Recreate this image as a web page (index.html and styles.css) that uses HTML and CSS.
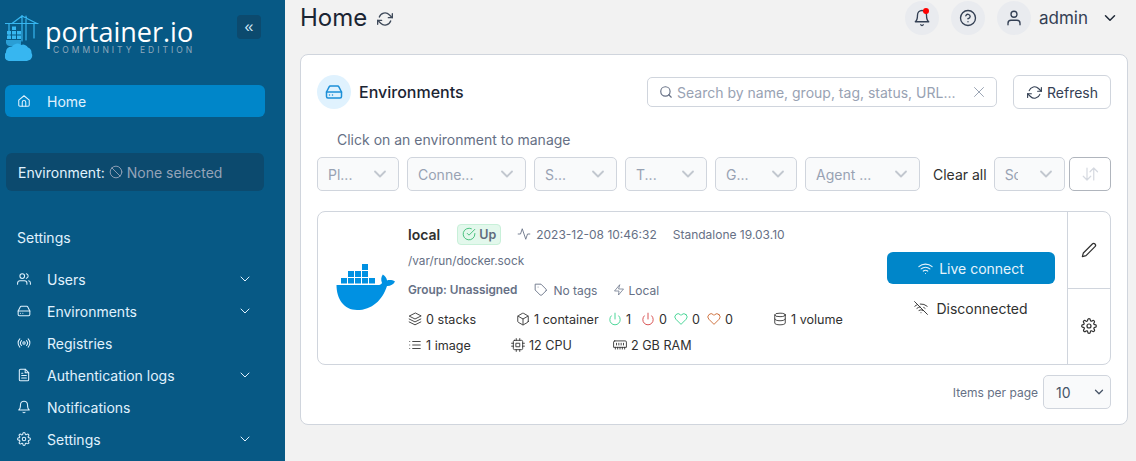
FILE: index.html
```html
<!DOCTYPE html>
<html lang="en">
<head>
  <meta charset="UTF-8" />
  <title>Portainer - Home</title>
  <meta name="viewport" content="width=device-width, initial-scale=1.0">
  <link rel="stylesheet" href="styles.css">
</head>
<body>
  <svg class="defs" width="0" height="0">
    <symbol id="chev" viewBox="0 0 24 24"><path d="M6 9l6 6 6-6"/></symbol>
    <symbol id="drive" viewBox="0 0 24 24"><path d="M22 12H2"/><path d="M5.5 5.1L2 12v6a2 2 0 0 0 2 2h16a2 2 0 0 0 2-2v-6l-3.5-6.9A2 2 0 0 0 16.8 4H7.2a2 2 0 0 0-1.7 1.1z"/><path d="M6 16h.01M10 16h.01"/></symbol>
    <symbol id="gear" viewBox="0 0 24 24"><circle cx="12" cy="12" r="3"/><path d="M19.4 15a1.65 1.65 0 0 0 .33 1.82l.06.06a2 2 0 1 1-2.83 2.83l-.06-.06a1.65 1.65 0 0 0-2.82 1.17V21a2 2 0 1 1-4 0v-.09a1.65 1.65 0 0 0-2.88-1.11l-.06.06a2 2 0 1 1-2.83-2.83l.06-.06A1.65 1.65 0 0 0 3.09 14H3a2 2 0 1 1 0-4h.09A1.65 1.65 0 0 0 4.2 7.12l-.06-.06a2 2 0 1 1 2.83-2.83l.06.06A1.65 1.65 0 0 0 10 3.09V3a2 2 0 1 1 4 0v.09a1.65 1.65 0 0 0 2.82 1.17l.06-.06a2 2 0 1 1 2.83 2.83l-.06.06A1.65 1.65 0 0 0 20.91 10H21a2 2 0 1 1 0 4h-.09a1.65 1.65 0 0 0-1.51 1z"/></symbol>
    <symbol id="bell" viewBox="0 0 24 24"><path d="M18 8a6 6 0 0 0-12 0c0 7-3 9-3 9h18s-3-2-3-9"/><path d="M13.7 21a2 2 0 0 1-3.4 0"/></symbol>
    <symbol id="refresh" viewBox="0 0 24 24"><path d="M23 4v6h-6"/><path d="M1 20v-6h6"/><path d="M3.5 9a9 9 0 0 1 14.9-3.4L23 10M1 14l4.6 4.4A9 9 0 0 0 20.5 15"/></symbol>
    <symbol id="power" viewBox="0 0 24 24"><path d="M18.4 6.6a9 9 0 1 1-12.8 0"/><path d="M12 2v10"/></symbol>
    <symbol id="heart" viewBox="0 0 24 24"><path d="M20.8 4.6a5.5 5.5 0 0 0-7.8 0L12 5.7l-1-1.1a5.5 5.5 0 0 0-7.8 7.8L12 21.200l8.800-8.800a5.500 5.500 0 0 0 0-7.800z"/></symbol>
  </svg>

  <div class="app">
    <!-- Sidebar -->
    <aside class="sidebar">
      <div class="brand">
        <svg class="brand-mark" viewBox="0 0 34 46">
          <g fill="none" stroke="#37b6f0" stroke-width="1.200">
            <path d="M0 8.500h33M7 8.500L17 1l15 7.500M17 0v26M21 1v24M29 9v14"/>
            <path d="M4 9l0 12"/>
          </g>
          <g fill="#37b6f0">
            <rect x="2" y="16" width="4" height="3.500"/><rect x="7" y="16" width="4" height="3.500"/>
            <rect x="7" y="11.500" width="4" height="3.500"/><rect x="12" y="16" width="4" height="3.500"/>
            <rect x="2" y="20.500" width="4" height="3.500"/><rect x="7" y="20.500" width="4" height="3.500"/><rect x="12" y="20.500" width="4" height="3.500"/>
            <path d="M1 25h15v6H4a4 4 0 0 1-3-3z" opacity=".75"/>
            <path d="M5 46a5 5 0 0 1-4-8.500 5.500 5.500 0 0 1 6-6 6 6 0 0 1 9-1.500 5.500 5.500 0 0 1 7 2.500 5.500 5.500 0 0 1 3.500 5.500 5 5 0 0 1-3.500 7.500 8 8 0 0 1-7 .5 12 12 0 0 1-11 .5z"/>
          </g>
        </svg>
        <div class="brand-text">
          <div class="brand-name">portainer.io</div>
          <div class="brand-sub">COMMUNITY EDITION</div>
        </div>
        <button class="collapse">«</button>
      </div>

      <a class="nav-home">
        <svg class="ico" viewBox="0 0 24 24"><path d="M3 10.500L12 3l9 7.500V19a2 2 0 0 1-2 2H5a2 2 0 0 1-2-2z"/><path d="M9 21v-7a3 3 0 0 1 6 0v7"/></svg>
        <span>Home</span>
      </a>

      <div class="env-box">
        <span>Environment:</span>
        <svg class="ico-sm" viewBox="0 0 24 24"><circle cx="12" cy="12" r="10"/><path d="M4.900 4.900l14.200 14.200"/></svg>
        <span class="env-none">None selected</span>
      </div>

      <div class="nav-title">Settings</div>
      <nav class="nav">
        <a class="nav-item">
          <svg class="ico" viewBox="0 0 24 24"><path d="M17 21v-2a4 4 0 0 0-4-4H5a4 4 0 0 0-4 4v2"/><circle cx="9" cy="7" r="4"/><path d="M23 21v-2a4 4 0 0 0-3-3.900M16 3.100a4 4 0 0 1 0 7.800"/></svg>
          <span>Users</span>
          <svg class="nav-chev"><use href="#chev"/></svg>
        </a>
        <a class="nav-item">
          <svg class="ico"><use href="#drive"/></svg>
          <span>Environments</span>
          <svg class="nav-chev"><use href="#chev"/></svg>
        </a>
        <a class="nav-item">
          <svg class="ico" viewBox="0 0 24 24"><circle cx="12" cy="12" r="2"/><path d="M16.200 7.800a6 6 0 0 1 0 8.400M7.800 16.200a6 6 0 0 1 0-8.400M19.100 4.900a10 10 0 0 1 0 14.200M4.900 19.100a10 10 0 0 1 0-14.200"/></svg>
          <span>Registries</span>
        </a>
        <a class="nav-item">
          <svg class="ico" viewBox="0 0 24 24"><path d="M14 2H6a2 2 0 0 0-2 2v16a2 2 0 0 0 2 2h12a2 2 0 0 0 2-2V8z"/><path d="M14 2v6h6M16 13H8M16 17H8M10 9H8"/></svg>
          <span>Authentication logs</span>
          <svg class="nav-chev"><use href="#chev"/></svg>
        </a>
        <a class="nav-item">
          <svg class="ico"><use href="#bell"/></svg>
          <span>Notifications</span>
        </a>
        <a class="nav-item">
          <svg class="ico"><use href="#gear"/></svg>
          <span>Settings</span>
          <svg class="nav-chev"><use href="#chev"/></svg>
        </a>
      </nav>
    </aside>

    <!-- Main column -->
    <main class="main">
      <header class="topbar">
        <h1>Home</h1>
        <svg class="top-refresh"><use href="#refresh"/></svg>
        <div class="top-right">
          <span class="round">
            <svg class="ico-top"><use href="#bell"/></svg>
            <i class="dot"></i>
          </span>
          <span class="round">
            <svg class="ico-top" viewBox="0 0 24 24"><circle cx="12" cy="12" r="10"/><path d="M9.100 9a3 3 0 0 1 5.800 1c0 2-3 3-3 3M12 17h.01"/></svg>
          </span>
          <span class="round">
            <svg class="ico-top" viewBox="0 0 24 24"><path d="M20 21v-2a4 4 0 0 0-4-4H8a4 4 0 0 0-4 4v2"/><circle cx="12" cy="7" r="4"/></svg>
          </span>
          <span class="user">admin</span>
          <svg class="user-chev"><use href="#chev"/></svg>
        </div>
      </header>

      <section class="panel">
        <div class="panel-head">
          <span class="panel-icon"><svg><use href="#drive"/></svg></span>
          <h2>Environments</h2>
          <div class="search">
            <svg class="search-ico" viewBox="0 0 24 24"><circle cx="11" cy="11" r="8"/><path d="M21 21l-4.300-4.300"/></svg>
            <span class="search-text">Search by name, group, tag, status, URL...</span>
            <svg class="search-x" viewBox="0 0 24 24"><path d="M18 6L6 18M6 6l12 12"/></svg>
          </div>
          <button class="refresh-btn"><svg><use href="#refresh"/></svg>Refresh</button>
        </div>

        <p class="hint">Click on an environment to manage</p>

        <div class="filters">
          <div class="select w-82"><span>Pl...</span><svg><use href="#chev"/></svg></div>
          <div class="select w-119"><span>Conne...</span><svg><use href="#chev"/></svg></div>
          <div class="select w-83"><span>S...</span><svg><use href="#chev"/></svg></div>
          <div class="select w-82"><span>T...</span><svg><use href="#chev"/></svg></div>
          <div class="select w-82"><span>G...</span><svg><use href="#chev"/></svg></div>
          <div class="select w-115"><span>Agent ...</span><svg><use href="#chev"/></svg></div>
          <span class="clear">Clear all</span>
          <div class="select w-71 sort"><span>So</span><svg><use href="#chev"/></svg></div>
          <button class="sort-btn">
            <svg viewBox="0 0 24 24"><path d="M8 4v16M3 15l5 5 5-5M17 20V4M12 9l5-5 5 5"/></svg>
          </button>
        </div>

        <article class="env">
          <svg class="whale" viewBox="0 0 60 46">
            <g fill="#0091e2">
              <rect x="5" y="14" width="6" height="5.500"/><rect x="12" y="14" width="6" height="5.500"/><rect x="19" y="14" width="6" height="5.500"/><rect x="26" y="14" width="6" height="5.500"/><rect x="33" y="14" width="6" height="5.500"/>
              <rect x="12" y="7" width="6" height="6"/><rect x="19" y="7" width="6" height="6"/><rect x="26" y="7" width="6" height="6"/>
              <rect x="26" y="0" width="6" height="6"/>
              <path d="M0.500 21H41.500c2 .2 3.500-.5 4.500-2-1.200-3-1-6 .8-8.500 2.500 1.500 4 3.500 4.200 6 2.500-.8 5.500-.5 8 1-1.500 3.200-4.500 4.500-8 4.400C46.500 36 36 46 21 46 8 46 .5 35 .5 21z"/>
            </g>
          </svg>

          <div class="env-body">
            <div class="row row-name">
              <strong class="env-name">local</strong>
              <span class="badge">
                <svg viewBox="0 0 24 24"><path d="M22 11.100V12a10 10 0 1 1-5.900-9.100"/><path d="M22 4L12 14l-3-3"/></svg>Up
              </span>
              <span class="meta meta-time">
                <svg viewBox="0 0 24 24"><path d="M22 12h-4l-3 9L9 3l-3 9H2"/></svg>2023-12-08 10:46:32
              </span>
              <span class="meta">Standalone 19.03.10</span>
            </div>
            <div class="row row-path">/var/run/docker.sock</div>
            <div class="row row-group">
              <b>Group: Unassigned</b>
              <span class="meta meta-tags">
                <svg viewBox="0 0 24 24"><path d="M20.600 13.400l-7.200 7.200a2 2 0 0 1-2.800 0L2 12V2h10l8.600 8.600a2 2 0 0 1 0 2.800z"/><path d="M7 7h.01"/></svg>No tags
              </span>
              <span class="meta meta-local">
                <svg viewBox="0 0 24 24"><path d="M13 2L3 14h9l-1 8 10-12h-9z"/></svg>Local
              </span>
            </div>
            <div class="row row-stats">
              <span class="stat s-stacks">
                <svg viewBox="0 0 24 24"><path d="M12 2L2 7l10 5 10-5z"/><path d="M2 12l10 5 10-5M2 17l10 5 10-5"/></svg>0 stacks
              </span>
              <span class="stat s-cont">
                <svg viewBox="0 0 24 24"><path d="M21 16V8a2 2 0 0 0-1-1.700l-7-4a2 2 0 0 0-2 0l-7 4A2 2 0 0 0 3 8v8a2 2 0 0 0 1 1.700l7 4a2 2 0 0 0 2 0l7-4a2 2 0 0 0 1-1.700z"/><path d="M3.300 7L12 12l8.700-5M12 22V12"/></svg>1 container
              </span>
              <span class="stat s-n"><svg class="c-green"><use href="#power"/></svg>1</span>
              <span class="stat s-n"><svg class="c-red"><use href="#power"/></svg>0</span>
              <span class="stat s-n"><svg class="c-green"><use href="#heart"/></svg>0</span>
              <span class="stat s-last"><svg class="c-orange"><use href="#heart"/></svg>0</span>
              <span class="stat">
                <svg viewBox="0 0 24 24"><ellipse cx="12" cy="5" rx="9" ry="3"/><path d="M21 12c0 1.700-4 3-9 3s-9-1.300-9-3"/><path d="M3 5v14c0 1.700 4 3 9 3s9-1.300 9-3V5"/></svg>1 volume
              </span>
            </div>
            <div class="row row-stats">
              <span class="stat s-image">
                <svg viewBox="0 0 24 24"><path d="M8 6h13M8 12h13M8 18h13M3 6h.01M3 12h.01M3 18h.01"/></svg>1 image
              </span>
              <span class="stat s-cpu">
                <svg viewBox="0 0 24 24"><rect x="4" y="4" width="16" height="16" rx="2"/><rect x="9" y="9" width="6" height="6"/><path d="M9 1v3M15 1v3M9 20v3M15 20v3M20 9h3M20 14h3M1 9h3M1 14h3"/></svg>12 CPU
              </span>
              <span class="stat">
                <svg viewBox="0 0 24 24"><path d="M3 5h18a2 2 0 0 1 2 2v9H1V7a2 2 0 0 1 2-2z"/><path d="M6 9v3M10 9v3M14 9v3M18 9v3M4 16v3M8 16v3M12 16v3M16 16v3M20 16v3"/></svg>2 GB RAM
              </span>
            </div>
          </div>

          <div class="env-connect">
            <button class="live">
              <svg viewBox="0 0 24 24"><path d="M5 12.600a11 11 0 0 1 14 0M1.400 9a16 16 0 0 1 21.200 0M8.500 16.100a6 6 0 0 1 7 0M12 20h.01"/></svg>Live connect
            </button>
            <div class="disc">
              <svg viewBox="0 0 24 24"><path d="M1 1l22 22M16.700 11.100A11 11 0 0 1 19 12.600M5 12.600a11 11 0 0 1 5.200-2.500M10.700 5.100A16 16 0 0 1 22.600 9M1.400 9a16 16 0 0 1 4.700-2.900M8.500 16.100a6 6 0 0 1 7 0M12 20h.01"/></svg>Disconnected
            </div>
          </div>

          <div class="env-actions">
            <a><svg viewBox="0 0 24 24"><path d="M17 3a2.800 2.800 0 0 1 4 4L7.500 20.500 2 22l1.500-5.500z"/></svg></a>
            <a><svg><use href="#gear"/></svg></a>
          </div>
        </article>

        <div class="pager">
          <span>Items per page</span>
          <div class="select page-size"><span>10</span><svg><use href="#chev"/></svg></div>
        </div>
      </section>
    </main>
  </div>
</body>
</html>
```

FILE: styles.css
```css
* {
  box-sizing: border-box;
}
html, body {
  margin: 0;
  height: 461px;
  overflow: hidden;
}
body {
  background: #f2f2f2;
  color: #303030;
  font-family: Inter, sans-serif;
  font-size: 14px;
}
svg {
  fill: none;
  stroke: currentColor;
  stroke-width: 2;
  stroke-linecap: round;
  stroke-linejoin: round;
}
h1, h2, p {
  margin: 0;
  font-weight: 400;
}
.defs {
  position: absolute;
}
.app {
  display: flex;
  height: 461px;
}

/* Sidebar */
.sidebar {
  width: 285px;
  flex: none;
  background: #075985;
  color: #e0f2fe;
  padding: 15px 20px 0 5px;
}
.brand {
  display: flex;
  height: 46px;
  align-items: flex-start;
}
.brand-mark {
  width: 34px;
  height: 46px;
  flex: none;
  stroke: none;
}
.brand-text {
  margin: 5px 0 0 6px;
  width: 192px;
}
.brand-name {
  color: #fff;
  font-family: "Open Sans", sans-serif;
  font-size: 27px;
  font-weight: 500;
  line-height: 24px;
}
.brand-sub {
  color: #8fa9bd;
  font-family: Inter, sans-serif;
  font-size: 8.500px;
  line-height: 10px;
  letter-spacing: 3px;
  margin: 1px 0 0 8px;
}
.collapse {
  width: 24px;
  height: 24px;
  border: 0;
  border-radius: 4px;
  background: #0c4a6e;
  color: #cfe6f5;
  font-size: 16px;
  line-height: 20px;
  padding: 0;
  margin-left: 0;
  flex: none;
}
.ico {
  width: 14px;
  height: 14px;
  flex: none;
  stroke-width: 1.800;
}
.nav-home {
  display: flex;
  align-items: center;
  gap: 16px;
  height: 32px;
  margin-top: 24px;
  padding-left: 12px;
  border-radius: 6px;
  background: #0086c9;
  color: #e0f2fe;
}
.env-box {
  display: flex;
  align-items: center;
  height: 38px;
  margin: 36px 0 0 1px;
  width: 258px;
  padding-left: 12px;
  border-radius: 6px;
  background: #0c4a6e;
  color: #e0f2fe;
}
.ico-sm {
  width: 14px;
  height: 14px;
  margin: 0 4px;
  color: #94a3b8;
  stroke-width: 1.600;
}
.env-none {
  color: #94a3b8;
}
.nav-title {
  margin: 38px 0 0 12px;
  line-height: 18px;
}
.nav {
  margin-top: 16px;
}
.nav-item {
  display: flex;
  align-items: center;
  gap: 16px;
  height: 32px;
  padding-left: 12px;
}
.nav-chev {
  width: 16px;
  height: 16px;
  margin-left: auto;
  margin-right: 12px;
  stroke-width: 1.500;
}

/* Top bar */
.main {
  flex: 1;
  padding: 0 8px 0 15px;
  min-width: 0;
}
.topbar {
  display: flex;
  align-items: center;
  height: 36px;
  padding-bottom: 0;
}
.topbar h1 {
  font-size: 24px;
  color: #1b2533;
  line-height: 36px;
}
.top-refresh {
  width: 16px;
  height: 16px;
  margin: 2px 0 0 10px;
  color: #3f4a5a;
  stroke-width: 2;
}
.top-right {
  display: flex;
  align-items: center;
  margin-left: auto;
  margin-right: 9px;
}
.round {
  position: relative;
  display: flex;
  align-items: center;
  justify-content: center;
  width: 34px;
  height: 34px;
  border-radius: 50%;
  background: #e9ebef;
  color: #344054;
  margin-left: 12px;
}
.ico-top {
  width: 18px;
  height: 18px;
  stroke-width: 1.800;
}
.dot {
  position: absolute;
  top: 7px;
  left: 18px;
  width: 6px;
  height: 6px;
  border-radius: 50%;
  background: #f00;
}
.user {
  margin-left: 8px;
  font-size: 17px;
  color: #344054;
}
.user-chev {
  width: 18px;
  height: 18px;
  margin-left: 13px;
  color: #1f2937;
}

/* Panel */
.panel {
  height: 371px;
  margin-top: 18px;
  padding: 20px 16px 0;
  background: #fff;
  border: 1px solid #d0d5dd;
  border-radius: 8px;
}
.panel-head {
  display: flex;
  align-items: center;
  height: 34px;
}
.panel-icon {
  display: flex;
  align-items: center;
  justify-content: center;
  width: 34px;
  height: 34px;
  border-radius: 50%;
  background: #e0f2fe;
  color: #1d90d8;
}
.panel-icon svg {
  width: 18px;
  height: 18px;
  stroke-width: 2;
}
.panel-head h2 {
  margin: -1px 0 0 8px;
  font-size: 16px;
  font-weight: 500;
  color: #1b2533;
}
.search {
  display: flex;
  align-items: center;
  width: 350px;
  height: 30px;
  margin-left: auto;
  padding: 0 8px 0 11px;
  border: 1px solid #d0d5dd;
  border-radius: 5px;
}
.search-ico {
  width: 14px;
  height: 14px;
  color: #667085;
  flex: none;
}
.search-text {
  margin-left: 4px;
  color: #98a2b3;
  white-space: nowrap;
}
.search-x {
  width: 18px;
  height: 18px;
  margin-left: auto;
  color: #98a2b3;
  stroke-width: 1.300;
}
.refresh-btn {
  display: flex;
  align-items: center;
  justify-content: center;
  gap: 5px;
  width: 98px;
  height: 34px;
  margin-left: 16px;
  padding: 0 0 0 1px;
  background: #fff;
  border: 1px solid #d0d5dd;
  border-radius: 6px;
  color: #344054;
  font-family: Inter, sans-serif;
  font-size: 14px;
}
.refresh-btn svg {
  width: 15px;
  height: 15px;
  stroke-width: 1.800;
}
.hint {
  margin: 22px 0 0 20px;
  line-height: 18px;
  color: #667085;
}

/* Filters */
.filters {
  display: flex;
  align-items: center;
  gap: 8px;
  margin-top: 8px;
  height: 34px;
}
.select {
  display: flex;
  align-items: center;
  justify-content: space-between;
  height: 34px;
  padding: 0 8px 0 10px;
  background: #f9fafb;
  border: 1px solid #d0d5dd;
  border-radius: 5px;
  color: #98a2b3;
  white-space: nowrap;
  flex: none;
}
.select svg {
  width: 20px;
  height: 20px;
  color: #c2c7cf;
  flex: none;
  stroke-width: 2.200;
}
.w-82 { width: 82px; }
.w-83 { width: 83px; }
.w-115 { width: 115px; }
.w-119 { width: 119px; }
.w-71 { width: 71px; }
.clear {
  margin: 0 -1px 0 5px;
  color: #303030;
  white-space: nowrap;
}
.sort span {
  width: 13px;
  overflow: hidden;
}
.sort-btn {
  display: flex;
  align-items: center;
  justify-content: center;
  width: 42px;
  height: 34px;
  margin-left: -4px;
  padding: 0;
  background: #fff;
  border: 1px solid #b0b5bd;
  border-radius: 5px;
  color: #d5d9e0;
}
.sort-btn svg {
  width: 18px;
  height: 18px;
  stroke-width: 1.600;
}

/* Environment row */
.env {
  display: flex;
  height: 154px;
  margin-top: 20px;
  border: 1px solid #d0d5dd;
  border-radius: 8px;
}
.whale {
  width: 60px;
  height: 46px;
  margin: 52px 0 0 18px;
  stroke: none;
  flex: none;
}
.env-body {
  width: 460px;
  margin-left: 12px;
  padding-top: 10px;
  flex: none;
  font-size: 12px;
}
.row {
  display: flex;
  align-items: center;
}
.row svg {
  width: 14px;
  height: 14px;
  flex: none;
  stroke-width: 1.500;
}
.row-name {
  height: 24px;
}
.env-name {
  font-size: 14px;
  font-weight: 600;
}
.badge {
  display: flex;
  align-items: center;
  gap: 3px;
  height: 21px;
  margin-left: 17px;
  padding: 0 4px;
  background: #e3f8ec;
  border: 1px solid #c8f0d9;
  border-radius: 4px;
  color: #5f6b7c;
  font-size: 12.500px;
  font-weight: 600;
}
.badge svg {
  color: #34b96f;
}
.meta {
  display: flex;
  align-items: center;
  gap: 5px;
  color: #667085;
  white-space: nowrap;
}
.meta-time {
  margin: 0 16px 0 16px;
}
.row-path {
  height: 16px;
  margin-top: 7px;
  color: #667085;
  font-size: 11.800px;
}
.row-group {
  height: 16px;
  margin-top: 13px;
}
.row-group b {
  font-weight: 600;
  color: #667085;
  font-size: 11.800px;
}
.meta-tags {
  margin-left: 17px;
}
.meta-local {
  margin-left: 16px;
  gap: 3px;
}
.meta-local svg {
  width: 12px;
  height: 12px;
}
.row-stats {
  height: 26px;
  font-size: 12.600px;
}
.row-group + .row-stats {
  margin-top: 8px;
}
.stat {
  display: flex;
  align-items: center;
  gap: 4px;
  color: #303030;
  white-space: nowrap;
}
.s-stacks { width: 108px; }
.s-cont { width: 92px; }
.s-n { width: 33px; }
.s-last { width: 66px; }
.s-image { width: 103px; }
.s-cpu { width: 102px; }
.c-green { color: #34d08a; }
.c-red { color: #d33f3f; }
.c-orange { color: #c9622a; }

.env-connect {
  width: 168px;
  margin-left: 19px;
  padding-top: 40px;
  flex: none;
}
.live {
  display: flex;
  align-items: center;
  justify-content: center;
  gap: 6px;
  width: 100%;
  height: 32px;
  padding: 0;
  background: #0086c9;
  border: 0;
  border-radius: 6px;
  color: #e6f4fc;
  font-family: Inter, sans-serif;
  font-size: 14px;
}
.live svg {
  width: 15px;
  height: 15px;
  stroke-width: 1.800;
}
.disc {
  display: flex;
  align-items: center;
  justify-content: center;
  gap: 8px;
  margin-top: 14px;
  height: 20px;
}
.disc svg {
  width: 14px;
  height: 14px;
  stroke-width: 1.600;
}
.env-actions {
  width: 43px;
  margin-left: auto;
  display: flex;
  flex-direction: column;
  border-left: 1px solid #d0d5dd;
}
.env-actions a {
  flex: 1;
  display: flex;
  align-items: center;
  justify-content: center;
  color: #303030;
}
.env-actions a + a {
  border-top: 1px solid #d0d5dd;
}
.env-actions svg {
  width: 16px;
  height: 16px;
  stroke-width: 1.800;
}

/* Pager */
.pager {
  display: flex;
  align-items: center;
  justify-content: flex-end;
  gap: 5px;
  margin-top: 10px;
  color: #667085;
  font-size: 12px;
}
.page-size {
  width: 68px;
  padding: 0 4px 0 12px;
  font-size: 14px;
  color: #475467;
}
.page-size svg {
  width: 14px;
  height: 14px;
  color: #475467;
}
```
